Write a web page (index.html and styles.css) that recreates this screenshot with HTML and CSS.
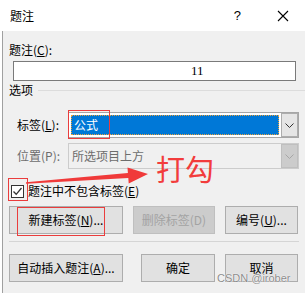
FILE: index.html
```html
<!DOCTYPE html>
<html lang="zh-CN">
<head>
<meta charset="utf-8">
<title>题注</title>
<link rel="stylesheet" href="styles.css">
</head>
<body>
<div class="win">
  <div class="titlebar">
    <span class="title">题注</span>
    <span class="help">?</span>
    <svg class="close" width="12" height="12" viewBox="0 0 12 12"><path d="M1 1L11 11M11 1L1 11" stroke="#000" stroke-width="1.1" fill="none"/></svg>
  </div>
  <div class="main">
    <div class="cap-label">题注(<u>C</u>):</div>
    <div class="cap-box">11</div>
    <div class="group-head"><span>选项</span><span class="rule"></span></div>
    <div class="row row-label">
      <span class="row-name">标签(<u>L</u>):</span>
      <div class="combo">
        <div class="combo-field"><div class="sel">公式</div></div>
        <div class="drop"><svg width="9" height="5" viewBox="0 0 9 5"><path d="M0.5 0.5L4.5 4.5L8.5 0.5" stroke="#333" fill="none"/></svg></div>
      </div>
    </div>
    <div class="row row-pos">
      <span class="row-name dim">位置(P):</span>
      <div class="combo disabled">
        <div class="combo-field"><span class="dim-text">所选项目上方</span></div>
        <div class="drop"><svg width="9" height="5" viewBox="0 0 9 5"><path d="M0.5 0.5L4.5 4.5L8.5 0.5" stroke="#a6a6a6" fill="none"/></svg></div>
      </div>
    </div>
    <div class="check-row">
      <span class="checkbox"><svg width="11" height="11" viewBox="0 0 11 11"><path d="M1.5 5.5L4.2 8.3L9.5 2" stroke="#333" stroke-width="1.3" fill="none"/></svg></span>
      <span>题注中不包含标签(<u>E</u>)</span>
    </div>
    <div class="btn-row">
      <button class="btn b-new">新建标签(<u>N</u>)...</button>
      <button class="btn b-del" disabled>删除标签(D)</button>
      <button class="btn b-num">编号(<u>U</u>)...</button>
    </div>
    <div class="sep"></div>
    <div class="btn-row row2">
      <button class="btn b-auto">自动插入题注(<u>A</u>)...</button>
      <button class="btn b-ok">确定</button>
      <button class="btn b-cancel">取消</button>
    </div>
  </div>

  <div class="mark mark-sel"></div>
  <div class="mark mark-check"></div>
  <div class="mark mark-new"></div>
  <svg class="arrow" width="160" height="40" viewBox="0 160 160 40">
    <polygon points="26,182.3 127.9,173 127.5,167.5 148,174 128.7,183.5 128.3,178 26.1,183.7" fill="#f03a3a"/>
  </svg>
  <div class="note">打勾</div>
  <div class="watermark">CSDN @irober</div>
</div>
</body>
</html>
```

FILE: styles.css
```css
* { box-sizing: border-box; }
html, body { margin: 0; padding: 0; }
body {
  width: 305px;
  height: 293px;
  overflow: hidden;
  background: #fff;
  font-family: "Noto Sans CJK SC", "Microsoft YaHei", sans-serif;
  font-size: 12px;
  color: #000;
}
u { text-decoration: underline; text-underline-offset: 1px; }

.win {
  position: relative;
  width: 305px;
  height: 293px;
  display: flex;
  flex-direction: column;
}

.titlebar {
  height: 31px;
  flex: none;
  display: flex;
  align-items: center;
  padding-left: 10px;
  background: #fff;
  line-height: 16px;
}
.title { flex: 1; }
.help {
  font-family: "Liberation Sans", sans-serif;
  font-size: 13px;
  margin-right: 36px;
}
.close { margin-right: 16px; }

.main {
  flex: 1;
  margin-left: 2px;
  border-left: 1px solid #a0a0a0;
  background: #f0f0f0;
  display: flex;
  flex-direction: column;
  line-height: 16px;
}

.cap-label { margin: 11px 0 0 6px; }
.cap-box {
  margin: 3px 0 0 10px;
  width: 283px;
  height: 20px;
  border: 1px solid #7a7a7a;
  background: #fff;
  font-family: "Liberation Serif", serif;
  font-size: 13px;
  line-height: 18px;
  padding-left: 177px;
}

.group-head {
  margin: 1px 0 0 6px;
  display: flex;
  align-items: center;
}
.rule {
  flex: 1;
  height: 1px;
  background: #dcdcdc;
  margin-left: 5px;
}

.row {
  display: flex;
  align-items: center;
  margin-left: 14px;
}
.row-label { margin-top: 14px; }
.row-pos { margin-top: 5px; }
.row-name { width: 51px; }
.dim { color: #6d6d6d; }

.combo {
  width: 231px;
  height: 26px;
  display: flex;
  border: 1px solid #a6a6a6;
  background: #fff;
}
.combo-field {
  flex: 1;
  padding: 2px;
}
.sel {
  height: 100%;
  background: #0078d7;
  color: #fff;
  border: 1px dotted #e9a23c;
  padding-left: 2px;
  line-height: 18px;
}
.drop {
  width: 17px;
  background: #e5e5e5;
  border: 1px solid #adadad;
  display: flex;
  align-items: center;
  justify-content: center;
}
.combo.disabled {
  border-color: #cccccc;
  background: #f0f0f0;
}
.combo.disabled .combo-field { padding: 3px 0 0 3px; line-height: 18px; }
.dim-text { color: #6d6d6d; }
.combo.disabled .drop {
  background: #cccccc;
  border-color: #bfbfbf;
}

.check-row {
  margin: 14px 0 0 8px;
  display: flex;
  align-items: center;
  gap: 4px;
}
.checkbox {
  width: 13px;
  height: 13px;
  border: 1px solid #333;
  background: #fff;
  display: flex;
  align-items: center;
  justify-content: center;
}

.btn-row {
  display: flex;
  margin-top: 7px;
}
.btn {
  height: 28px;
  background: #e1e1e1;
  border: 1px solid #adadad;
  font-family: inherit;
  font-size: 12px;
  color: #000;
  padding: 0;
  line-height: 16px;
}
.btn:disabled {
  background: #cccccc;
  border-color: #bfbfbf;
  color: #a3a3a3;
}
.b-new { margin-left: 6px; width: 114px; }
.b-del { margin-left: 10px; width: 82px; }
.b-num { margin-left: 10px; width: 73px; }
.row2 { margin-top: 12px; }
.b-auto { margin-left: 6px; width: 114px; }
.b-ok { margin-left: 18px; width: 74px; }
.b-cancel { margin-left: 10px; width: 73px; }

.sep {
  margin: 7px 0 0 6px;
  width: 290px;
  height: 1px;
  background: #d5d5d5;
}

.mark {
  position: absolute;
  border: 1px solid #ea3d3d;
}
.mark-sel { left: 68px; top: 110px; width: 42px; height: 29px; }
.mark-check { left: 8px; top: 178px; width: 20px; height: 23px; }
.mark-new { left: 17px; top: 207px; width: 88px; height: 29px; }

.arrow { position: absolute; left: 0; top: 160px; }
.note {
  position: absolute;
  left: 156px;
  top: 153px;
  font-size: 29px;
  line-height: 30px;
  color: #f23c3c;
}
.watermark {
  position: absolute;
  left: 217px;
  top: 272px;
  font-family: "Liberation Sans", sans-serif;
  font-size: 11px;
  line-height: 13px;
  color: #8c8c8c;
  text-shadow: 0 0 1px #fff, 0 0 1px #fff;
}
```
